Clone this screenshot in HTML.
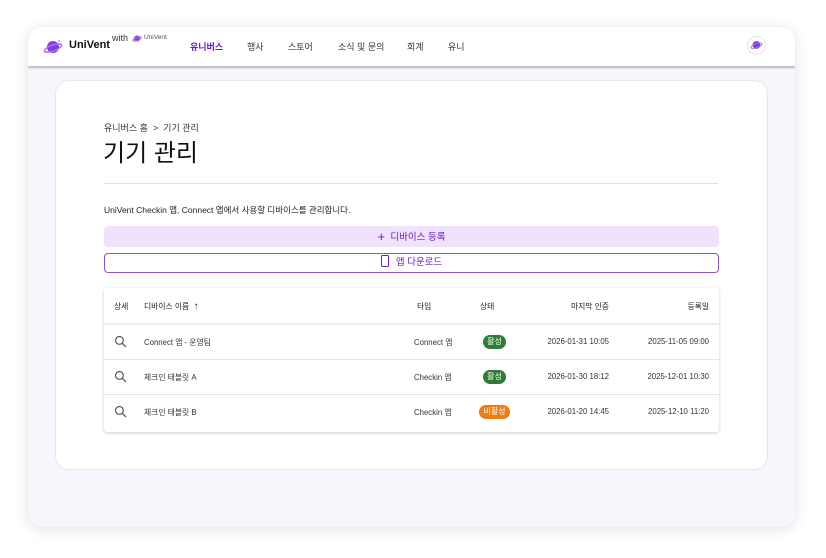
<!DOCTYPE html><html><head><meta charset="utf-8"><style>
*{box-sizing:border-box;margin:0;padding:0}
body{width:826px;height:558px;background:#fff;font-family:"Liberation Sans","Noto Sans CJK KR",sans-serif;position:relative;overflow:hidden;color:#222}
.win{position:absolute;left:28px;top:27px;width:767px;height:500px;border-radius:14px;background:#f8f5fd;box-shadow:0 2px 14px rgba(0,0,0,.12);overflow:hidden}
.nav{position:absolute;left:0;top:0;width:100%;height:39px;background:#fff;box-shadow:0 2px 2px rgba(0,0,0,.25)}
.a{position:absolute;white-space:nowrap}
.card{position:absolute;left:27px;top:53px;width:713px;height:390px;background:#fff;border:1px solid #ece6f3;border-radius:14px}
.tbl{position:absolute;width:615px;height:144px;background:#fff;box-shadow:0 1px 3px rgba(0,0,0,.2);border-radius:3px}
.row{position:absolute;left:0;width:100%;height:35px;border-top:1px solid #e4e4ea;font-size:7.8px;color:#333}
.row .a{top:12px}
.badge{position:absolute;top:10px;height:14px;border-radius:7px;color:#fff;font-size:8px;line-height:14px;text-align:center}
</style></head><body>
<div class="win">
 <div class="nav">
  <svg class="a" style="left:15px;top:11px" width="20" height="18" viewBox="0 0 20 18"><circle cx="10" cy="9" r="6" fill="#7b3fe0"/><ellipse cx="10" cy="10" rx="9" ry="3" fill="none" stroke="#b26cf5" stroke-width="1.5" transform="rotate(-20 10 10)"/><circle cx="16" cy="3" r="1" fill="#c58cff"/></svg>
  <div class="a" style="left:41px;top:12px;font-size:11px;font-weight:bold;color:#111">UniVent</div>
  <div class="a" style="left:84px;top:6px;font-size:9px;color:#333">with</div>
  <svg class="a" style="left:104px;top:7px" width="10" height="9" viewBox="0 0 20 18"><circle cx="10" cy="9" r="6" fill="#7b3fe0"/><ellipse cx="10" cy="10" rx="9" ry="3" fill="none" stroke="#b26cf5" stroke-width="2" transform="rotate(-20 10 10)"/></svg>
  <div class="a" style="left:116px;top:7px;font-size:6.5px;color:#555">UniVent</div>
  <div class="a" style="left:162px;top:13px;font-size:9px;font-weight:bold;color:#6a1bc9">유니버스</div>
  <div class="a" style="left:219px;top:13px;font-size:9px;color:#333">행사</div>
  <div class="a" style="left:260px;top:13px;font-size:9px;color:#333">스토어</div>
  <div class="a" style="left:310px;top:13px;font-size:9px;color:#333">소식 및 문의</div>
  <div class="a" style="left:379px;top:13px;font-size:9px;color:#333">회계</div>
  <div class="a" style="left:420px;top:13px;font-size:9px;color:#333">유니</div>
  <div class="a" style="left:719px;top:9px;width:19px;height:19px;border-radius:50%;border:1px solid #e5e5e5"></div>
  <svg class="a" style="left:722px;top:12px" width="13" height="12" viewBox="0 0 20 18"><circle cx="10" cy="9" r="6" fill="#7b3fe0"/><ellipse cx="10" cy="10" rx="9" ry="3" fill="none" stroke="#b26cf5" stroke-width="1.5" transform="rotate(-20 10 10)"/></svg>
 </div>
 <div class="card"></div>
</div>
<div class="a" style="left:104px;top:121px;font-size:9px;color:#333">유니버스 홈 &nbsp;&gt;&nbsp; 기기 관리</div>
<div class="a" style="left:103px;top:133px;font-size:24px;color:#111">기기 관리</div>
<div class="a" style="left:104px;top:183px;width:614px;height:1px;background:#e2e2e2"></div>
<div class="a" style="left:104px;top:204px;font-size:8.5px;color:#222">UniVent Checkin 앱, Connect 앱에서 사용할 디바이스를 관리합니다.</div>
<div class="a" style="left:104px;top:226px;width:615px;height:21px;background:#f0e2fc;border-radius:4px;text-align:center;font-size:9.5px;line-height:21px;color:#6a1bc9"><span style="font-size:13px;vertical-align:-1px">+</span>&nbsp; 디바이스 등록</div>
<div class="a" style="left:104px;top:253px;width:615px;height:20px;border:1px solid #8f50d6;border-radius:4px;text-align:center;font-size:9.5px;line-height:18px;color:#6a1bc9"><span style="display:inline-block;width:8px;height:12px;border:1.5px solid #6a1bc9;border-radius:1.5px;vertical-align:-2px;margin-right:7px"></span>앱 다운로드</div>
<div class="tbl" style="left:104px;top:288px">
 <div class="row" style="top:0;border:none;height:36px;color:#222;font-size:7.8px"><div class="a" style="left:10px;top:13px">상세</div><div class="a" style="left:40px;top:13px">디바이스 이름 &nbsp;<span style="font-size:10px">↑</span></div><div class="a" style="left:313px;top:13px">타입</div><div class="a" style="left:376px;top:13px">상태</div><div class="a" style="right:110px;top:13px">마지막 인증</div><div class="a" style="right:10px;top:13px">등록일</div></div>
 <div class="row" style="top:35px;border-top:2px solid #ececf2"><svg class="a" style="left:10px;top:10px" width="13" height="13" viewBox="0 0 12 12"><circle cx="5" cy="5" r="3.6" fill="none" stroke="#555" stroke-width="1.1"/><path d="M7.7 7.7L11 11" stroke="#555" stroke-width="1.2"/></svg><div class="a" style="left:40px">Connect 앱 - 운영팀</div><div class="a" style="left:310px">Connect 앱</div><div class="badge" style="left:379px;width:23px;background:#2e7d32">활성</div><div class="a" style="right:110px">2026-01-31 10:05</div><div class="a" style="right:10px">2025-11-05 09:00</div></div>
 <div class="row" style="top:71px"><svg class="a" style="left:10px;top:10px" width="13" height="13" viewBox="0 0 12 12"><circle cx="5" cy="5" r="3.6" fill="none" stroke="#555" stroke-width="1.1"/><path d="M7.7 7.7L11 11" stroke="#555" stroke-width="1.2"/></svg><div class="a" style="left:40px">체크인 태블릿 A</div><div class="a" style="left:310px">Checkin 앱</div><div class="badge" style="left:379px;width:23px;background:#2e7d32">활성</div><div class="a" style="right:110px">2026-01-30 18:12</div><div class="a" style="right:10px">2025-12-01 10:30</div></div>
 <div class="row" style="top:106px"><svg class="a" style="left:10px;top:10px" width="13" height="13" viewBox="0 0 12 12"><circle cx="5" cy="5" r="3.6" fill="none" stroke="#555" stroke-width="1.1"/><path d="M7.7 7.7L11 11" stroke="#555" stroke-width="1.2"/></svg><div class="a" style="left:40px">체크인 태블릿 B</div><div class="a" style="left:310px">Checkin 앱</div><div class="badge" style="left:375px;width:31px;background:#f07c12">비활성</div><div class="a" style="right:110px">2026-01-20 14:45</div><div class="a" style="right:10px">2025-12-10 11:20</div></div>
</div>
</body></html>
